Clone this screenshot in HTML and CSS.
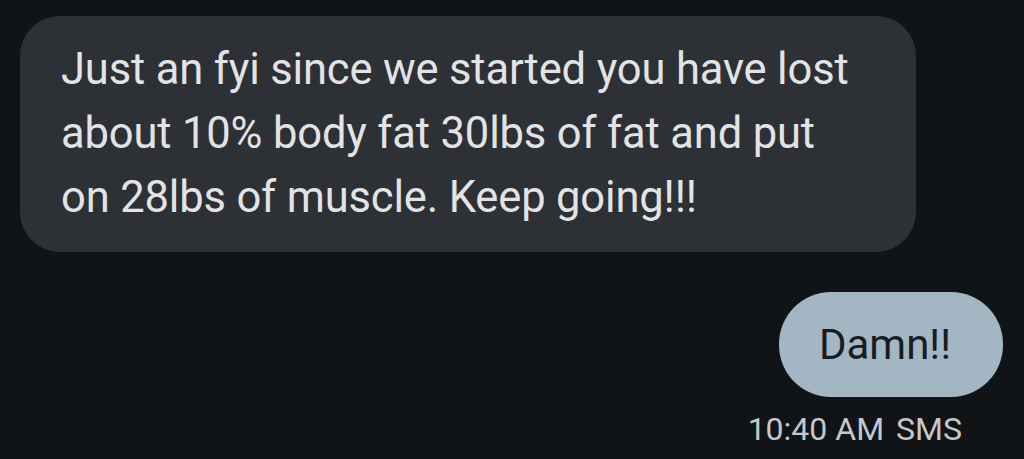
FILE: index.html
```html
<!DOCTYPE html>
<html>
<head>
<meta charset="utf-8">
<link rel="stylesheet" href="styles.css">
</head>
<body>
<div class="thread">
  <div class="row incoming">
    <div class="bubble in">Just an fyi since we started you have lost about 10% body fat 30lbs of fat and put on 28lbs of muscle. Keep going!!!</div>
  </div>
  <div class="row outgoing">
    <div class="bubble out">Damn!!</div>
    <div class="meta"><span>10:40 AM</span><span>SMS</span></div>
  </div>
</div>
</body>
</html>
```
FILE: styles.css
```css
html, body {
  margin: 0;
  padding: 0;
  background: #111417;
  height: 100%;
  overflow: hidden;
}
.thread {
  display: flex;
  flex-direction: column;
  padding: 16px 21px 0 20px;
  font-family: Roboto, "Noto Sans", sans-serif;
}
.row {
  display: flex;
  flex-direction: column;
}
.incoming { align-items: flex-start; }
.outgoing { align-items: flex-end; margin-top: 40px; }
.bubble.in {
  box-sizing: border-box;
  width: 896px;
  padding: 22px 58px 22px 41px;
  background: #2d3034;
  color: #e3e3e6;
  border-radius: 40px;
  font-size: 43.5px;
  letter-spacing: -0.15px;
  line-height: 64px;
}
.bubble.out {
  box-sizing: border-box;
  height: 105px;
  padding: 0 52px 0 40px;
  display: flex;
  align-items: center;
  background: #a2b6c4;
  color: #1a1c1f;
  border-radius: 52px;
  font-size: 42px;
}
.meta {
  display: flex;
  gap: 12px;
  margin-top: 14px;
  margin-right: 41px;
  color: #c5c7ca;
  font-size: 32px;
  line-height: 36px;
}
```
